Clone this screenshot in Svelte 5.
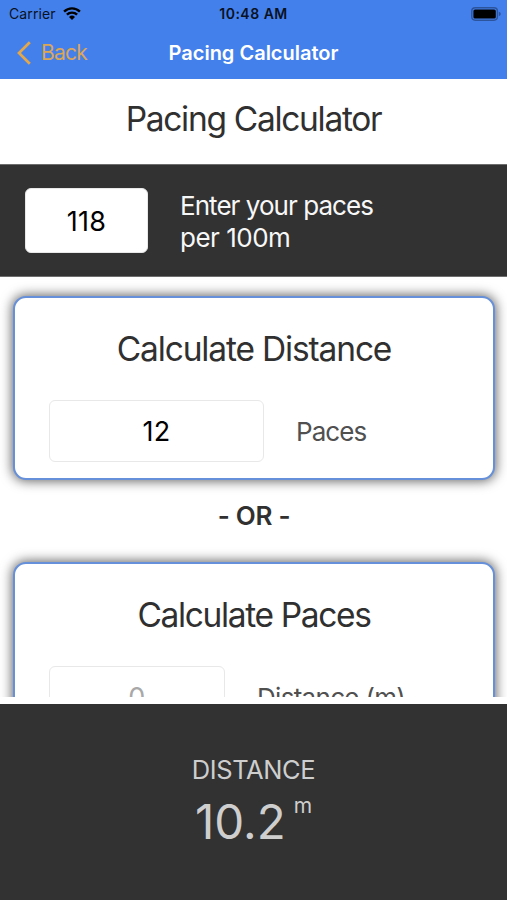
<script lang="ts">
  let pacesPer100 = $state('118');
  let paces = $state('12');
  let meters = $state('');

  let distance = $derived(((Number(paces) / Number(pacesPer100)) * 100).toFixed(1));
</script>

<div class="screen">
  <header class="top">
    <div class="status-bar">
      <div class="carrier">
        <span>Carrier</span>
        <svg viewBox="0 0 18 13" width="18" height="13">
          <path d="M1.1 4.6 A11.2 11.2 0 0 1 16.9 4.6" />
          <path d="M3.9 7.7 A7.2 7.2 0 0 1 14.1 7.7" />
          <path class="solid" d="M9 13 L6 9.9 A4.3 4.3 0 0 1 12 9.9 Z" />
        </svg>
      </div>
      <span class="clock">10:48 AM</span>
      <svg class="battery" viewBox="0 0 30 14" width="30" height="14">
        <rect class="shell" x="0.8" y="0.8" width="25.6" height="12.4" rx="3.4" />
        <rect x="2.4" y="2.4" width="22.4" height="9.2" rx="1.6" />
        <path class="tip" d="M27.8 4.8 Q29.8 5.4 29.8 7 Q29.8 8.6 27.8 9.2 Z" />
      </svg>
    </div>
    <nav class="nav-bar">
      <button class="back">
        <svg viewBox="0 0 14 24" width="14" height="24">
          <path d="M12.8 1.2 L2 12 L12.8 22.8" />
        </svg>
        <span>Back</span>
      </button>
      <span class="nav-title">Pacing Calculator</span>
    </nav>
  </header>

  <h1>Pacing Calculator</h1>

  <section class="pace-bar">
    <input class="pace-input" type="text" bind:value={pacesPer100} />
    <p><span class="tight">Enter your paces</span><br />per 100m</p>
  </section>

  <main class="scroll">
    <section class="card">
      <h2 class="distance-title">Calculate Distance</h2>
      <div class="row">
        <input class="wide" type="text" bind:value={paces} />
        <span class="unit tight">Paces</span>
      </div>
    </section>

    <p class="or">- OR -</p>

    <section class="card">
      <h2 class="paces-title">Calculate Paces</h2>
      <div class="row">
        <input class="narrow" type="text" placeholder="0" bind:value={meters} />
        <span class="unit">Distance (m)</span>
      </div>
    </section>
  </main>

  <footer class="result">
    <span class="result-label">DISTANCE</span>
    <div class="result-value">
      <span class="number">{distance}</span>
      <span class="suffix">m</span>
    </div>
  </footer>
</div>

<style>
  :global(body) {
    background: #fff;
  }

  .screen {
    display: flex;
    flex-direction: column;
    height: 900px;
    overflow: hidden;
    background: #fff;
    color: #303030;
    font-family: Inter, 'Liberation Sans', sans-serif;
  }

  .screen * {
    box-sizing: border-box;
  }

  h1,
  h2,
  p {
    margin: 0;
    font-weight: 400;
  }

  input {
    padding: 0;
    font: inherit;
    font-size: 27px;
    letter-spacing: 0.3px;
    text-align: center;
    color: #000;
    background: #fff;
    border: 1px solid #e8e8e8;
    border-radius: 6px;
    outline: none;
  }

  input::placeholder {
    color: #a8a8a8;
    opacity: 1;
  }

  /* Header */
  .top {
    flex: none;
    height: 79px;
    background: #4480ec;
  }

  .status-bar {
    display: grid;
    grid-template-columns: 1fr auto 1fr;
    align-items: center;
    height: 27px;
    padding: 0 6px 0 9px;
    font-size: 14px;
    color: #0a1222;
  }

  .carrier {
    display: flex;
    align-items: center;
    gap: 7px;
    letter-spacing: 0.1px;
  }

  .carrier path {
    fill: none;
    stroke: #000;
    stroke-width: 2.4;
  }

  .carrier .solid {
    fill: #000;
    stroke: none;
  }

  .clock {
    margin-right: 3px;
    font-weight: 600;
    letter-spacing: 0.5px;
  }

  .battery {
    justify-self: end;
  }

  .battery .shell {
    fill: none;
    stroke: #2c549c;
    stroke-width: 1.4;
  }

  .battery .tip {
    fill: #2c549c;
  }

  .nav-bar {
    display: grid;
    grid-template-columns: 1fr auto 1fr;
    align-items: center;
    height: 51px;
    padding: 0 17px;
  }

  .back {
    display: flex;
    align-items: center;
    gap: 10px;
    padding: 0;
    border: none;
    background: none;
    color: #dca655;
    font: inherit;
    font-size: 21px;
    letter-spacing: -0.8px;
  }

  .back path {
    fill: none;
    stroke: #e5a849;
    stroke-width: 2.7;
  }

  .nav-title {
    color: #fff;
    font-size: 20px;
    font-weight: 600;
    letter-spacing: 0;
  }

  h1 {
    flex: none;
    height: 85px;
    line-height: 80px;
    text-align: center;
    font-size: 33.5px;
    letter-spacing: -1.3px;
  }

  /* Pace setting */
  .pace-bar {
    flex: none;
    display: flex;
    align-items: center;
    gap: 32px;
    height: 113px;
    padding: 0 25px;
    background: #323232;
    border-top: 1px solid #6d6d6d;
    border-bottom: 1px solid #6d6d6d;
  }

  .pace-bar p {
    padding-top: 2px;
    color: #f7f7f7;
    font-size: 26px;
    line-height: 32px;
    letter-spacing: -0.5px;
  }

  .tight,
  .unit.tight {
    letter-spacing: -0.95px;
  }

  .pace-input {
    width: 123px;
    height: 65px;
    padding-top: 1px;
  }

  /* Calculators */
  .scroll {
    flex: none;
    height: 420px;
    padding: 19px 12px 0 13px;
    overflow: hidden;
  }

  .card {
    height: 184px;
    padding: 0 36px;
    background: #fff;
    border: 2px solid #6690da;
    border-radius: 13px;
    box-shadow: 0 0 12px 1px rgba(0, 0, 0, 0.62);
  }

  h2 {
    line-height: 102px;
    text-align: center;
    font-size: 33.5px;
  }

  .distance-title {
    height: 102px;
    letter-spacing: -1.15px;
  }

  .paces-title {
    height: 102px;
    letter-spacing: -1.35px;
  }

  .row {
    display: flex;
    align-items: center;
    gap: 32px;
    margin-left: -2px;
  }

  .row input {
    height: 62px;
  }

  .wide {
    width: 215px;
  }

  .narrow {
    width: 176px;
  }

  .unit {
    color: #505050;
    font-size: 26px;
    letter-spacing: -0.7px;
  }

  .or {
    height: 82px;
    line-height: 72px;
    text-align: center;
    font-size: 26px;
    font-weight: 600;
    letter-spacing: -0.3px;
  }

  /* Result */
  .result {
    flex: 1;
    display: flex;
    flex-direction: column;
    align-items: center;
    margin-top: 7px;
    padding-top: 50px;
    background: #323232;
    color: #cecece;
  }

  .result-label {
    font-size: 25.5px;
    line-height: 32px;
    letter-spacing: -0.4px;
  }

  .result-value {
    display: flex;
    align-items: flex-start;
    gap: 8px;
  }

  .number {
    font-size: 47.5px;
    line-height: 72px;
    letter-spacing: 0;
  }

  .suffix {
    font-size: 21px;
    line-height: 40px;
  }
</style>
